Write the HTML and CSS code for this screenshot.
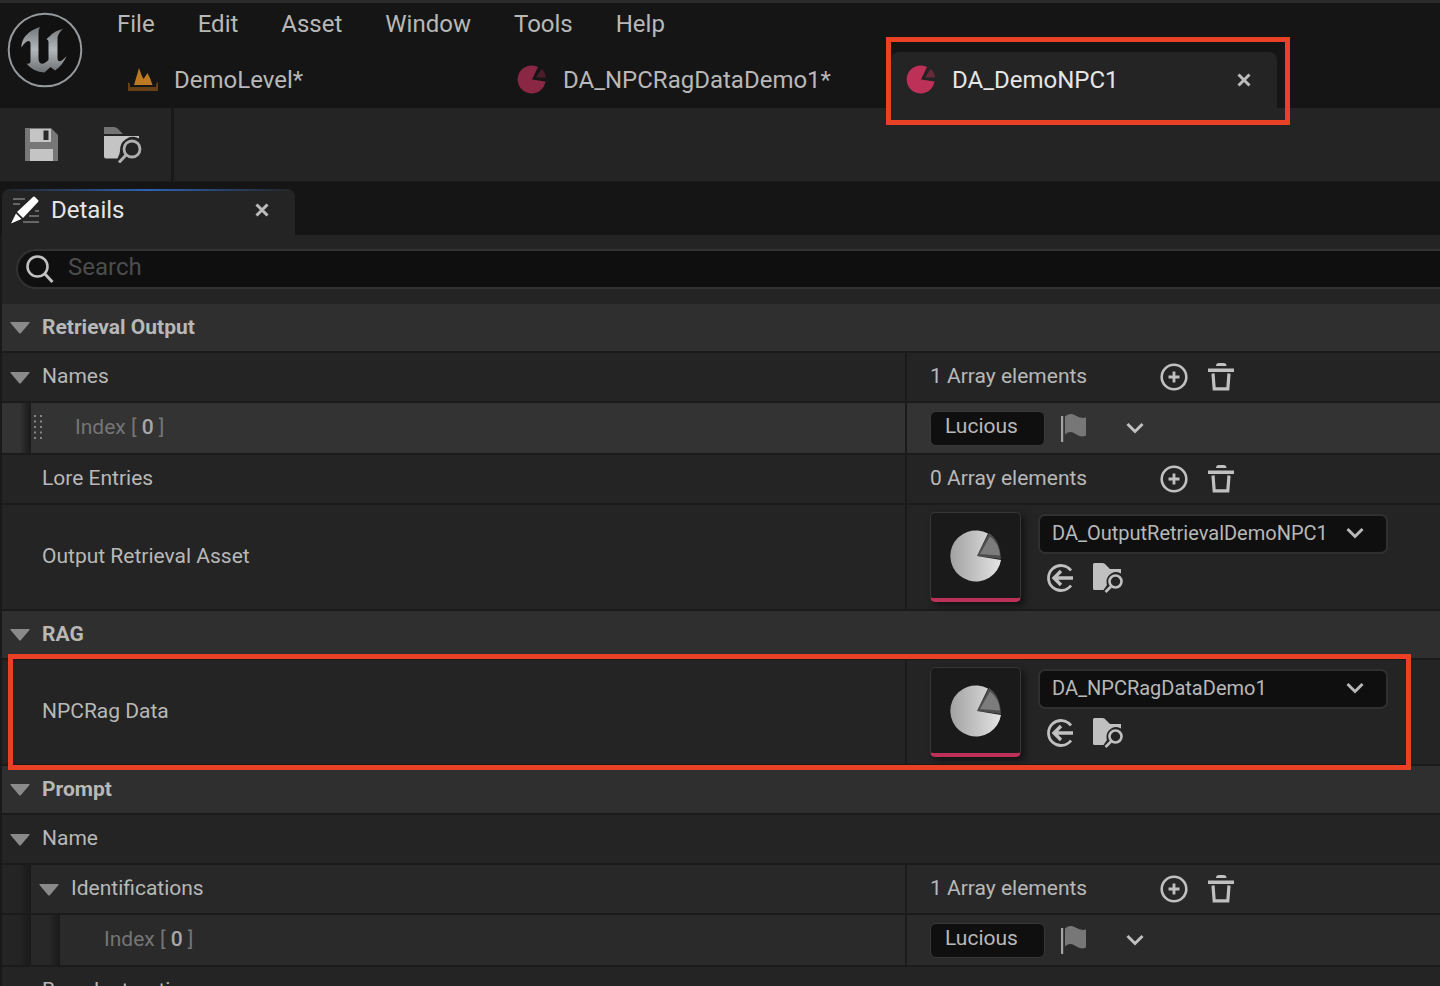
FILE: index.html
```html
<!DOCTYPE html>
<html lang="en">
<head>
<meta charset="utf-8">
<title>DA_DemoNPC1</title>
<link rel="stylesheet" href="styles.css">
</head>
<body>
<svg class="defs" aria-hidden="true">
  <defs>
    <linearGradient id="metal" x1="0" y1="0" x2="0" y2="1"><stop offset="0" stop-color="#74787b"/><stop offset=".5" stop-color="#b4b7b9"/><stop offset="1" stop-color="#6c7073"/></linearGradient>
    <linearGradient id="pie" x1="0" y1="0" x2="1" y2="0"><stop offset="0" stop-color="#a2a2a2"/><stop offset="1" stop-color="#e4e4e4"/></linearGradient>
  </defs>
  <symbol id="i-pie" viewBox="0 0 30 30"><path fill="currentColor" d="M15 15.500 21 3A14 14 0 1 0 28.500 17.500Z"/><path fill="currentColor" opacity=".45" d="M19 13.500 24.500 5Q28.500 8.500 29 13.500Z"/></symbol>
  <symbol id="i-pie-lg" viewBox="0 0 52 54"><path fill="#4e4e4e" d="M27 27 39 4Q50 11 51 30Z"/><path fill="url(#pie)" d="M27 27 38 4.500A25.500 25.500 0 1 0 51 31Z"/><path fill="#7c7c7c" d="M30 25 40 7.500Q49 14 50 26.500Z"/></symbol>
  <symbol id="i-close" viewBox="0 0 14 14"><path d="M1.500 1.500 12.500 12.500M12.500 1.500 1.500 12.500" stroke="currentColor" stroke-width="3" fill="none"/></symbol>
  <symbol id="i-plus" viewBox="0 0 28 28"><circle cx="14" cy="14" r="12.300" fill="none" stroke="currentColor" stroke-width="2.600"/><path d="M14 8.500V19.500M8.500 14H19.500" stroke="currentColor" stroke-width="2.800"/></symbol>
  <symbol id="i-trash" viewBox="0 0 26 28"><path fill="currentColor" d="M8 3Q8 0 11 0H15.500Q18.500 0 18.500 3ZM0 5.500H26V9H0Z"/><path d="M5 10.500 6.200 25.800H19.800L21 10.500" fill="none" stroke="currentColor" stroke-width="3.200"/></symbol>
  <symbol id="i-flag" viewBox="0 0 26 28"><path fill="#a4a4a4" d="M0 2H2.200V28H0Z"/><path fill="#777" d="M4 2.500Q9-2 14.500 1.500T25 3.500V21.500Q20 24 14.500 20T4 20.500Z"/></symbol>
  <symbol id="i-chev" viewBox="0 0 18 12"><path d="M1.500 2 9 9.500 16.500 2" fill="none" stroke="currentColor" stroke-width="3"/></symbol>
  <symbol id="i-arrow" viewBox="0 0 28 30"><path d="M25 7.500A12.500 12.500 0 1 0 25 22.500" fill="none" stroke="currentColor" stroke-width="2.800"/><path d="M27 15H9M15 8 8 15 15 22" fill="none" stroke="currentColor" stroke-width="3.400"/></symbol>
  <symbol id="i-browse" viewBox="0 0 30 30"><path fill="currentColor" d="M1.500 0H9Q11 0 12 1L17 6H28V10.500A9.500 9.500 0 0 0 13.500 18Q13.500 21 14 22L10.500 27H1.500Q0 27 0 25.500V1.500Q0 0 1.500 0Z"/><circle cx="22.500" cy="18.500" r="6" fill="none" stroke="currentColor" stroke-width="2.600"/><path d="M18 23.500 12.500 29" stroke="currentColor" stroke-width="2.600"/></symbol>
  <symbol id="i-tri" viewBox="0 0 20 12"><path fill="currentColor" d="M1 0H19Q20 0 19.500 1L11 11Q10 12 9 11L.500 1Q0 0 1 0Z"/></symbol>
</svg>

<header class="titlebar">
  <svg class="logo" viewBox="0 0 76 76" role="img" aria-label="Unreal Engine"><circle cx="38" cy="38" r="36.300" fill="#111" stroke="#95999b" stroke-width="2"/><path fill="url(#metal)" d="M33 15Q23 18 18 24.500Q14 30 14.500 35.500Q18 29.500 21.500 29Q23.500 29 23.500 32V49Q23.500 52.500 19.500 51.500Q26 60 37.500 60.500L43.500 55 48 58.500Q56 53 59.500 44Q54 50.500 51.500 49Q50.500 48 50.500 46V26Q51 21 56 17Q48 18.500 43 24L39.500 27Q41.500 28 41.500 30V48Q37 52.500 34 51.500Q31.500 50.500 31.500 46V22Q31 18 33 15Z"/></svg>
  <div class="title-main">
    <nav class="menu" aria-label="Main menu">
      <button>File</button><button>Edit</button><button>Asset</button><button>Window</button><button>Tools</button><button>Help</button>
    </nav>
    <div class="tabs" role="tablist">
      <button class="tab" role="tab"><svg class="tab-icon" viewBox="0 0 30 30"><path fill="#684015" d="M0 18 2 20V23H28V20L30 18V27H0Z"/><path fill="#bc7a25" d="M6 21 9 11 11 4 13.500 11 15.500 15 19.500 9 22 14 24.500 21Z"/></svg>DemoLevel*</button>
      <button class="tab" role="tab"><svg class="tab-icon pink-dim"><use href="#i-pie"/></svg>DA_NPCRagDataDemo1*</button>
      <div class="tab tab-active" role="tab" aria-selected="true"><svg class="tab-icon pink"><use href="#i-pie"/></svg>DA_DemoNPC1<button class="close" aria-label="Close DA_DemoNPC1"><svg><use href="#i-close"/></svg></button><span class="mark mark-tab"></span></div>
    </div>
  </div>
</header>

<div class="toolbar">
  <button aria-label="Save"><svg class="tool-icon" viewBox="0 0 38 36"><path fill="#777" d="M1 1H27L34 8V34H1Z"/><path fill="#c4c4c4" d="M6 2H27V15H6ZM6 22H29V34H6Z"/><path fill="#2b2b2b" d="M19.500 3.500H24.500V13H19.500Z"/></svg></button>
  <button aria-label="Browse to asset"><svg class="tool-icon" viewBox="0 0 38 36"><path fill="#747474" d="M0 0H10Q12 0 13.500 1.500L19 7H0Z"/><path fill="#c4c4c4" d="M0 9H35V11.500A13 13 0 0 0 16 24Q16 27 13.500 31.500H2Q0 31.500 0 29.500Z"/><circle cx="28" cy="22" r="8" fill="none" stroke="#b0b0b0" stroke-width="2.800"/><path d="M22 28 15 35.500" stroke="#b0b0b0" stroke-width="3"/></svg></button>
</div>

<div class="panel-tabs">
  <div class="panel-tab">
    <svg class="details-icon" viewBox="0 0 30 28"><path d="M2 3H14M2 8H9M24 15H28M18 20H28M12 26H28" stroke="#666" stroke-width="2" fill="none"/><path fill="#fff" d="M22 1Q23 0 24.500 1.500L27 4Q28 5 27 6L12 22 6 16ZM5 17.500 10.500 23 0 27.500Z"/></svg>
    <h1>Details</h1>
    <button class="close" aria-label="Close Details"><svg><use href="#i-close"/></svg></button>
  </div>
</div>

<main class="panel">
  <div class="search-area">
    <label class="search"><svg viewBox="0 0 28 28"><circle cx="11.500" cy="11.500" r="10" fill="none" stroke="#c0c0c0" stroke-width="2.600"/><path d="M18.500 18.500 26.500 27" stroke="#c0c0c0" stroke-width="3"/></svg><input type="search" placeholder="Search" aria-label="Search"></label>
  </div>

  <h2 class="category"><button class="fold" aria-label="Collapse Retrieval Output"><svg><use href="#i-tri"/></svg></button>Retrieval Output</h2>
  <div class="row">
    <div class="name"><button class="fold" aria-label="Collapse Names"><svg><use href="#i-tri"/></svg></button>Names</div>
    <div class="value"><span class="count">1 Array elements</span><button class="ic" aria-label="Add element"><svg class="plus"><use href="#i-plus"/></svg></button><button class="ic" aria-label="Remove all"><svg class="trash"><use href="#i-trash"/></svg></button></div>
  </div>
  <div class="row row-item row-hover">
    <div class="name"><span class="indent"></span><svg class="grip" viewBox="0 0 8 26"><path d="M1 1V26M7 1V26" stroke="#858585" stroke-width="2" stroke-dasharray="2 3.500"/></svg><span class="index">Index [ <b>0</b> ]</span></div>
    <div class="value"><input class="text" value="Lucious" aria-label="Names index 0"><button class="ic" aria-label="Localization"><svg class="flag"><use href="#i-flag"/></svg></button><button class="ic more" aria-label="Element options"><svg class="chev"><use href="#i-chev"/></svg></button></div>
  </div>
  <div class="row">
    <div class="name"><span class="nofold"></span>Lore Entries</div>
    <div class="value"><span class="count">0 Array elements</span><button class="ic" aria-label="Add element"><svg class="plus"><use href="#i-plus"/></svg></button><button class="ic" aria-label="Remove all"><svg class="trash"><use href="#i-trash"/></svg></button></div>
  </div>
  <div class="row row-asset">
    <div class="name"><span class="nofold"></span>Output Retrieval Asset</div>
    <div class="value"><div class="thumb"><svg><use href="#i-pie-lg"/></svg></div><div class="asset"><button class="combo"><span>DA_OutputRetrievalDemoNPC1</span><svg class="chev"><use href="#i-chev"/></svg></button><div class="asset-tools"><button class="ic" aria-label="Use selected asset"><svg class="arrow"><use href="#i-arrow"/></svg></button><button class="ic" aria-label="Browse to asset"><svg class="browse"><use href="#i-browse"/></svg></button></div></div></div>
  </div>

  <h2 class="category"><button class="fold" aria-label="Collapse RAG"><svg><use href="#i-tri"/></svg></button>RAG</h2>
  <div class="row row-asset">
    <div class="name"><span class="nofold"></span>NPCRag Data</div>
    <div class="value"><div class="thumb"><svg><use href="#i-pie-lg"/></svg></div><div class="asset"><button class="combo"><span>DA_NPCRagDataDemo1</span><svg class="chev"><use href="#i-chev"/></svg></button><div class="asset-tools"><button class="ic" aria-label="Use selected asset"><svg class="arrow"><use href="#i-arrow"/></svg></button><button class="ic" aria-label="Browse to asset"><svg class="browse"><use href="#i-browse"/></svg></button></div></div></div>
    <span class="mark mark-row"></span>
  </div>

  <h2 class="category"><button class="fold" aria-label="Collapse Prompt"><svg><use href="#i-tri"/></svg></button>Prompt</h2>
  <div class="row row-full">
    <div class="name"><button class="fold" aria-label="Collapse Name"><svg><use href="#i-tri"/></svg></button>Name</div>
  </div>
  <div class="row row-sub">
    <div class="name"><span class="indent"></span><button class="fold" aria-label="Collapse Identifications"><svg><use href="#i-tri"/></svg></button>Identifications</div>
    <div class="value"><span class="count">1 Array elements</span><button class="ic" aria-label="Add element"><svg class="plus"><use href="#i-plus"/></svg></button><button class="ic" aria-label="Remove all"><svg class="trash"><use href="#i-trash"/></svg></button></div>
  </div>
  <div class="row row-item row-sub2">
    <div class="name"><span class="indent"></span><span class="indent indent2"></span><span class="index">Index [ <b>0</b> ]</span></div>
    <div class="value"><input class="text" value="Lucious" aria-label="Identifications index 0"><button class="ic" aria-label="Localization"><svg class="flag"><use href="#i-flag"/></svg></button><button class="ic more" aria-label="Element options"><svg class="chev"><use href="#i-chev"/></svg></button></div>
  </div>
  <div class="row row-full">
    <div class="name"><span class="nofold"></span>Base Instructions</div>
  </div>
</main>
</body>
</html>
```
FILE: styles.css
```css
* { box-sizing: border-box; }
body {
  margin: 0;
  height: 100vh;
  overflow: hidden;
  display: flex;
  flex-direction: column;
  background: #151515;
  color: #b8b8b8;
  font-family: Roboto, "Liberation Sans", sans-serif;
  font-size: 21px;
  line-height: 28px;
}
button {
  display: flex;
  align-items: center;
  padding: 0;
  border: 0;
  background: none;
  color: inherit;
  font: inherit;
}
svg { display: block; flex: none; }
.defs { position: absolute; width: 0; height: 0; }

.titlebar {
  flex: none;
  display: flex;
  border-top: 3px solid #2a2a2a;
  padding-left: 7px;
  gap: 30px;
}
.logo { width: 76px; height: 76px; margin-top: 9px; }
.title-main { flex: 1; font-size: 24px; }
.menu { display: flex; gap: 43px; height: 49px; padding: 0 0 8px 4px; align-items: center; }
.tabs { display: flex; height: 56px; }
.tab { display: flex; align-items: center; width: 389px; padding-left: 15px; }
.tab-icon { width: 30px; height: 30px; margin: 0 16px 2px 0; }
.pink { color: #bd3159; }
.pink-dim { color: #8a2745; }
.tab-active {
  position: relative;
  width: 386px;
  padding-right: 26px;
  border-radius: 8px 8px 0 0;
  background: #242424;
  color: #e6e6e6;
}
.close { margin-left: auto; color: #bcbcbc; }
.close svg { width: 14px; height: 14px; }
.mark { position: absolute; border: 5px solid #ea4025; pointer-events: none; z-index: 1; }
.mark-tab { inset: -15px -13px -17px -5px; }
.mark-row { inset: -6px 29px -6px 6px; }

.toolbar {
  flex: none;
  display: flex;
  align-items: center;
  gap: 42px;
  height: 74px;
  padding-left: 24px;
  background: linear-gradient(90deg, transparent 171px, #191919 171px, #191919 174px, transparent 174px) #242424;
  border-bottom: 1px solid #1c1c1c;
}
.tool-icon { width: 38px; height: 36px; }

.panel-tabs { flex: none; display: flex; padding: 7px 2px 0; }
.panel-tab {
  display: flex;
  align-items: center;
  width: 293px;
  height: 46px;
  padding: 0 26px 4px 9px;
  border-radius: 8px 8px 0 0;
  background: linear-gradient(90deg, transparent, #2b62b8 50%, transparent) top / 100% 2px no-repeat #242424;
  color: #e6e6e6;
}
.details-icon { width: 30px; height: 28px; margin-right: 10px; }
h1 { margin: 0; font-size: 24px; font-weight: 400; line-height: 28px; }

.panel { flex: 1; min-height: 0; border-left: 2px solid #191919; background: #242424; }
.search-area { padding: 14px 0 15px 14px; }
.search {
  display: flex;
  align-items: center;
  height: 40px;
  padding-left: 8px;
  gap: 14px;
  border: 2px solid #323232;
  border-right: 0;
  border-radius: 20px 0 0 20px;
  background: #0f0f0f;
}
.search svg { width: 28px; height: 28px; }
.search input {
  flex: 1;
  min-width: 0;
  padding: 0 0 4px;
  border: 0;
  outline: 0;
  background: none;
  color: #c0c0c0;
  font: inherit;
  font-size: 24px;
}
.search input::placeholder { color: #4c4c4c; opacity: 1; }

.category {
  display: flex;
  align-items: center;
  height: 49px;
  margin: 0;
  padding: 0 0 2px;
  border-bottom: 2px solid #1b1b1b;
  background: #2f2f2f;
  font-size: 21px;
  font-weight: 700;
  line-height: 28px;
}
.fold { width: 40px; padding: 3px 0 0 8px; color: #8a8a8a; flex: none; }
.fold svg { width: 20px; height: 12px; }
.nofold { width: 40px; flex: none; }
.row {
  position: relative;
  display: grid;
  grid-template-columns: 903fr 535fr;
  height: 50px;
  border-bottom: 2px solid #1b1b1b;
}
.name { display: flex; align-items: center; padding-bottom: 2px; }
.value { display: flex; align-items: center; padding-left: 23px; border-left: 2px solid #1b1b1b; }
.row-full { grid-template-columns: 1fr; }
.row-item { height: 52px; }
.row-asset { height: 106px; }
.row-hover { background: #333; }
.row-sub { background: #282828; }
.row-sub2 { background: #2a2a2a; }
.indent {
  align-self: stretch;
  width: 29px;
  margin-bottom: -2px;
  background: linear-gradient(90deg, transparent 60%, #191919);
  flex: none;
}
.row-sub .indent, .row-sub2 .indent { background: linear-gradient(90deg, #242424 60%, #191919); }
.row-sub2 .indent2 { background: linear-gradient(90deg, #282828 60%, #191919); }
.grip { width: 8px; height: 26px; margin-left: 3px; }
.index { padding-left: 44px; color: #757575; white-space: pre; }
.grip + .index { padding-left: 33px; }
.index b { font-weight: 500; color: #a8a8a8; }

.count { width: 230px; padding-bottom: 2px; }
.ic { color: #c0c0c0; }
.plus { width: 28px; height: 28px; margin-right: 20px; }
.trash { width: 26px; height: 28px; }
.text {
  width: 115px;
  height: 35px;
  margin-right: 16px;
  padding: 0 14px 5px;
  border: 1px solid #383838;
  border-radius: 6px;
  background: #0f0f0f;
  color: #b8b8b8;
  font: inherit;
}
.flag { width: 26px; height: 28px; }
.chev { width: 18px; height: 12px; }
.more { margin-left: 39px; }

.thumb {
  display: flex;
  align-items: center;
  justify-content: center;
  width: 91px;
  height: 90px;
  margin-right: 17px;
  border: 1px solid #363636;
  border-bottom: 4px solid #bd3159;
  border-radius: 5px;
  background: #1a1a1a;
  box-shadow: 4px 4px 6px #141414;
}
.thumb svg { width: 52px; height: 54px; }
.asset { flex: 0 1 350px; min-width: 0; padding-bottom: 8px; }
.combo {
  justify-content: space-between;
  width: 100%;
  height: 40px;
  padding: 0 22px 2px 12px;
  border: 2px solid #303030;
  border-radius: 7px;
  background: #0f0f0f;
  font-size: 20px;
}
.asset-tools { display: flex; gap: 19px; padding: 9px 0 0 8px; }
.arrow { width: 28px; height: 30px; }
.browse { width: 30px; height: 30px; }
```
